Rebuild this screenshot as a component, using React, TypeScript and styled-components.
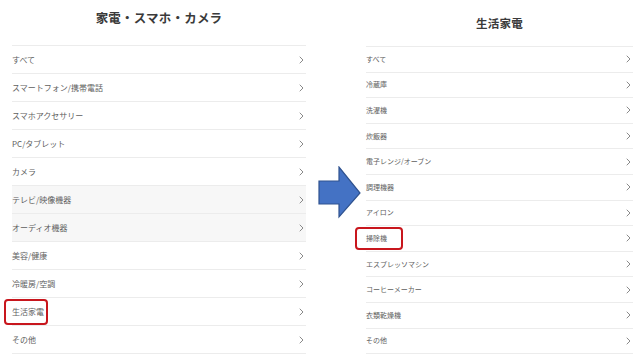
import styled, { createGlobalStyle } from "styled-components";

const GlobalStyle = createGlobalStyle`
  html, body {
    margin: 0;
    padding: 0;
    background: #ffffff;
  }
  body {
    font-family: "Noto Sans CJK JP", "Noto Sans", sans-serif;
  }
`;

type Item = { label: string; shaded?: boolean; marked?: boolean };

const leftItems: Item[] = [
  { label: "すべて" },
  { label: "スマートフォン/携帯電話" },
  { label: "スマホアクセサリー" },
  { label: "PC/タブレット" },
  { label: "カメラ" },
  { label: "テレビ/映像機器", shaded: true },
  { label: "オーディオ機器", shaded: true },
  { label: "美容/健康" },
  { label: "冷暖房/空調" },
  { label: "生活家電", marked: true },
  { label: "その他" },
];

const rightItems: Item[] = [
  { label: "すべて" },
  { label: "冷蔵庫" },
  { label: "洗濯機" },
  { label: "炊飯器" },
  { label: "電子レンジ/オーブン" },
  { label: "調理機器" },
  { label: "アイロン" },
  { label: "掃除機", marked: true },
  { label: "エスプレッソマシン" },
  { label: "コーヒーメーカー" },
  { label: "衣類乾燥機" },
  { label: "その他" },
];

const Chevron = () => (
  <svg width="5" height="8" viewBox="0 0 5 8">
    <polyline
      points="1,1 4,4 1,7"
      fill="none"
      stroke="#8a8a8a"
      strokeWidth="1"
      strokeLinecap="round"
      strokeLinejoin="round"
    />
  </svg>
);

const App = () => {
  return (
    <>
      <GlobalStyle />
      <Page>
        <Panel $width={294}>
          <Title $height={45} $size={12.5} $lift={10}>
            家電・スマホ・カメラ
          </Title>
          <List>
            {leftItems.map((item) => (
              <Row key={item.label} $height={28} $shaded={item.shaded}>
                <Label $size={8} $marked={item.marked} $wide>
                  {item.label}
                </Label>
                <Chevron />
              </Row>
            ))}
          </List>
        </Panel>
        <ArrowColumn>
          <svg width="44" height="53" viewBox="0 0 44 53">
            <polygon
              points="1,15 21,15 21,1 42,27 21,51 21,38 1,38"
              fill="#4472c4"
              stroke="#2f528f"
              strokeWidth="1.2"
              strokeLinejoin="miter"
            />
          </svg>
        </ArrowColumn>
        <Panel $width={267}>
          <Title $height={46} $size={11.5} $lift={0}>
            生活家電
          </Title>
          <List>
            {rightItems.map((item) => (
              <Row key={item.label} $height={25.6}>
                <Label $size={7} $marked={item.marked}>
                  {item.label}
                </Label>
                <Chevron />
              </Row>
            ))}
          </List>
        </Panel>
      </Page>
    </>
  );
};

const Page = styled.div`
  display: flex;
  flex-direction: row;
  width: 640px;
  height: 363px;
  box-sizing: border-box;
  padding-left: 12px;
  background: #ffffff;
  overflow: hidden;
`;

const Panel = styled.div<{ $width: number }>`
  display: flex;
  flex-direction: column;
  width: ${(p) => p.$width}px;
  flex-shrink: 0;
`;

const Title = styled.h2<{ $height: number; $size: number; $lift: number }>`
  margin: 0;
  height: ${(p) => p.$height}px;
  display: flex;
  align-items: center;
  justify-content: center;
  padding-bottom: ${(p) => p.$lift}px;
  box-sizing: border-box;
  font-size: ${(p) => p.$size}px;
  font-weight: 700;
  color: #3a3a3a;
  letter-spacing: 0.2px;
`;

const List = styled.ul`
  margin: 0;
  padding: 0;
  list-style: none;
  border-top: 1px solid #ececec;
`;

const Row = styled.li<{ $height: number; $shaded?: boolean }>`
  display: flex;
  align-items: center;
  justify-content: space-between;
  height: ${(p) => p.$height}px;
  box-sizing: border-box;
  padding-right: 2px;
  border-bottom: 1px solid #ececec;
  background: ${(p) => (p.$shaded ? "#f7f7f7" : "transparent")};
`;

const Label = styled.span<{ $size: number; $marked?: boolean; $wide?: boolean }>`
  position: relative;
  font-size: ${(p) => p.$size}px;
  color: #5e5e5e;
  line-height: 1;

  &::after {
    content: "";
    display: ${(p) => (p.$marked ? "block" : "none")};
    position: absolute;
    top: ${(p) => (p.$wide ? -9 : -8)}px;
    bottom: ${(p) => (p.$wide ? -9 : -8)}px;
    left: ${(p) => (p.$wide ? -8 : -11)}px;
    right: ${(p) => (p.$wide ? -4 : -16)}px;
    border: 2px solid #c8161d;
    border-radius: 4px;
  }
`;

const ArrowColumn = styled.div`
  width: 60px;
  flex-shrink: 0;
  display: flex;
  align-items: flex-start;
  justify-content: center;
  padding-top: 166px;
  padding-left: 7px;
  box-sizing: border-box;
`;

export default App;
